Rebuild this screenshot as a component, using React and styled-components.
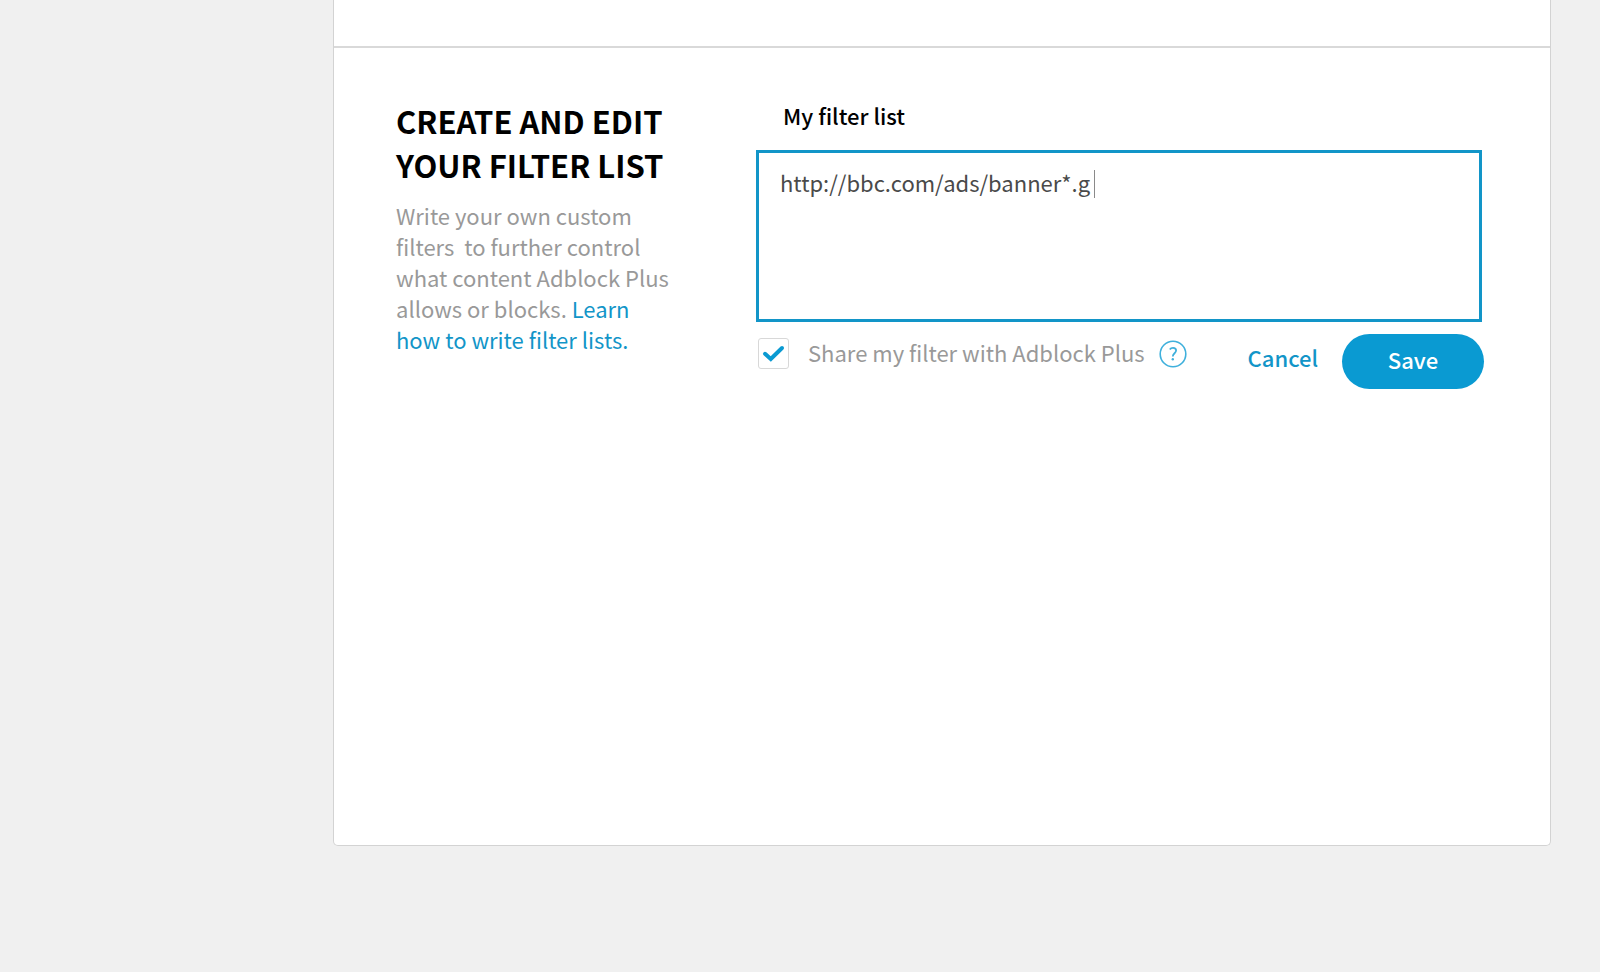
import React, { useState } from "react";
import styled, { createGlobalStyle } from "styled-components";

const blue = "#0a9ad2";
const linkBlue = "#1295c8";
const grey = "#999999";
const line = "#d3d3d3";

const GlobalStyle = createGlobalStyle`
  *, *::before, *::after { box-sizing: border-box; }
  body {
    margin: 0;
    background: #f0f0f0;
    color: #000;
    font-family: "Noto Sans CJK SC", "Noto Sans", sans-serif;
    font-size: 22px;
    line-height: 31px;
  }
`;

const Page = styled.div`
  padding: 0 49px 127px 333px;
`;

const Panel = styled.main`
  background: #fff;
  border: 1px solid ${line};
  border-top: 0;
  border-radius: 0 0 5px 5px;
`;

const PreviousSection = styled.div`
  height: 48px;
  border-bottom: 2px solid #d9d9d9;
`;

const Section = styled.section`
  display: flex;
  align-items: flex-start;
  gap: 80px;
  padding: 51px 68px 456px 62px;
`;

const Intro = styled.div`
  flex: 0 0 280px;
`;

const Title = styled.h2`
  margin: 0 0 13px;
  font-size: 31px;
  line-height: 44px;
  font-weight: 700;
  white-space: nowrap;
`;

const Description = styled.p`
  margin: 0;
  color: ${grey};
  white-space: pre-wrap;
`;

const Link = styled.a`
  color: ${linkBlue};
  text-decoration: none;
`;

const Form = styled.form`
  flex: 1;
  min-width: 0;
`;

const FieldLabel = styled.label`
  display: block;
  padding: 1px 0 19px 27px;
  font-weight: 500;
`;

const Editor = styled.div`
  position: relative;
  display: flex;
`;

const FilterInput = styled.textarea`
  width: 100%;
  height: 172px;
  padding: 14px 21px;
  border: 3px solid ${linkBlue};
  border-radius: 0;
  outline: 0;
  resize: none;
  background: #fff;
  color: #4a4a4a;
  font: inherit;
`;

const Caret = styled.span`
  position: absolute;
  top: 20px;
  left: 338px;
  width: 1px;
  height: 28px;
  background: #8a8a8a;
`;

const Footer = styled.div`
  display: flex;
  align-items: flex-start;
  padding-top: 12px;
  margin-right: -2px;
`;

const Share = styled.div`
  display: flex;
  align-items: flex-start;
  flex: 1;
  padding: 4px 0 0 2px;
`;

const Tick = styled.span`
  display: grid;
  flex: none;
  margin-right: 19px;

  > * { grid-area: 1 / 1; }

  svg {
    pointer-events: none;
    visibility: ${(p) => (p.$on ? "visible" : "hidden")};
  }
`;

const TickBox = styled.input`
  appearance: none;
  width: 31px;
  height: 31px;
  margin: 0;
  border: 1px solid #d8d8d8;
  border-radius: 3px;
  background: #fff;
`;

const ShareLabel = styled.label`
  color: ${grey};
  line-height: 29px;
  white-space: nowrap;
`;

const HelpButton = styled.button`
  display: flex;
  margin-left: 14px;
  padding: 2px 0 0;
  border: 0;
  background: none;
`;

const CancelButton = styled.button`
  padding: 0;
  border: 0;
  background: none;
  color: ${linkBlue};
  font: inherit;
  font-weight: 500;
  line-height: 47px;
  margin-right: 24px;
`;

const SaveButton = styled.button`
  width: 142px;
  height: 55px;
  padding: 0 0 5px;
  border: 0;
  border-radius: 28px;
  background: ${blue};
  color: #fff;
  font: inherit;
  font-weight: 500;
`;

export default function App() {
  const [shared, setShared] = useState(true);
  const [filters, setFilters] = useState("http://bbc.com/ads/banner*.g");

  return (
    <>
      <GlobalStyle />
      <Page>
        <Panel>
          <PreviousSection />
          <Section>
            <Intro>
              <Title>
                CREATE AND EDIT
                <br />
                YOUR FILTER LIST
              </Title>
              <Description>
                {"Write your own custom filters  to further control what content Adblock Plus allows or blocks. "}
                <Link href="#filters">Learn how to write filter lists.</Link>
              </Description>
            </Intro>
            <Form onSubmit={(e) => e.preventDefault()}>
              <FieldLabel htmlFor="filters">My filter list</FieldLabel>
              <Editor>
                <FilterInput
                  id="filters"
                  spellCheck={false}
                  value={filters}
                  onChange={(e) => setFilters(e.target.value)}
                />
                <Caret aria-hidden="true" />
              </Editor>
              <Footer>
                <Share>
                  <Tick $on={shared}>
                    <TickBox
                      id="share"
                      type="checkbox"
                      checked={shared}
                      onChange={(e) => setShared(e.target.checked)}
                    />
                    <svg width="31" height="31" viewBox="0 0 31 31" fill="none" aria-hidden="true">
                      <path d="M7 15.8L12.8 21L24 10" stroke={blue} strokeWidth="4" strokeLinecap="round" />
                    </svg>
                  </Tick>
                  <ShareLabel htmlFor="share">Share my filter with Adblock Plus</ShareLabel>
                  <HelpButton type="button" aria-label="Help">
                    <svg width="28" height="28" viewBox="0 0 28 28" fill="none" stroke="#3fb0dc">
                      <circle cx="14" cy="14" r="12.8" strokeWidth="1.6" />
                      <path d="M10.8 9.6C11.6 8.4 12.7 7.9 14 7.9C15.9 7.9 17.1 9 17.1 10.6C17.1 13 13.8 13.6 13.8 16.4" strokeWidth="1.8" />
                      <circle cx="13.8" cy="19.2" r="1.2" fill="#3fb0dc" stroke="none" />
                    </svg>
                  </HelpButton>
                </Share>
                <CancelButton type="button">Cancel</CancelButton>
                <SaveButton type="submit">Save</SaveButton>
              </Footer>
            </Form>
          </Section>
        </Panel>
      </Page>
    </>
  );
}
